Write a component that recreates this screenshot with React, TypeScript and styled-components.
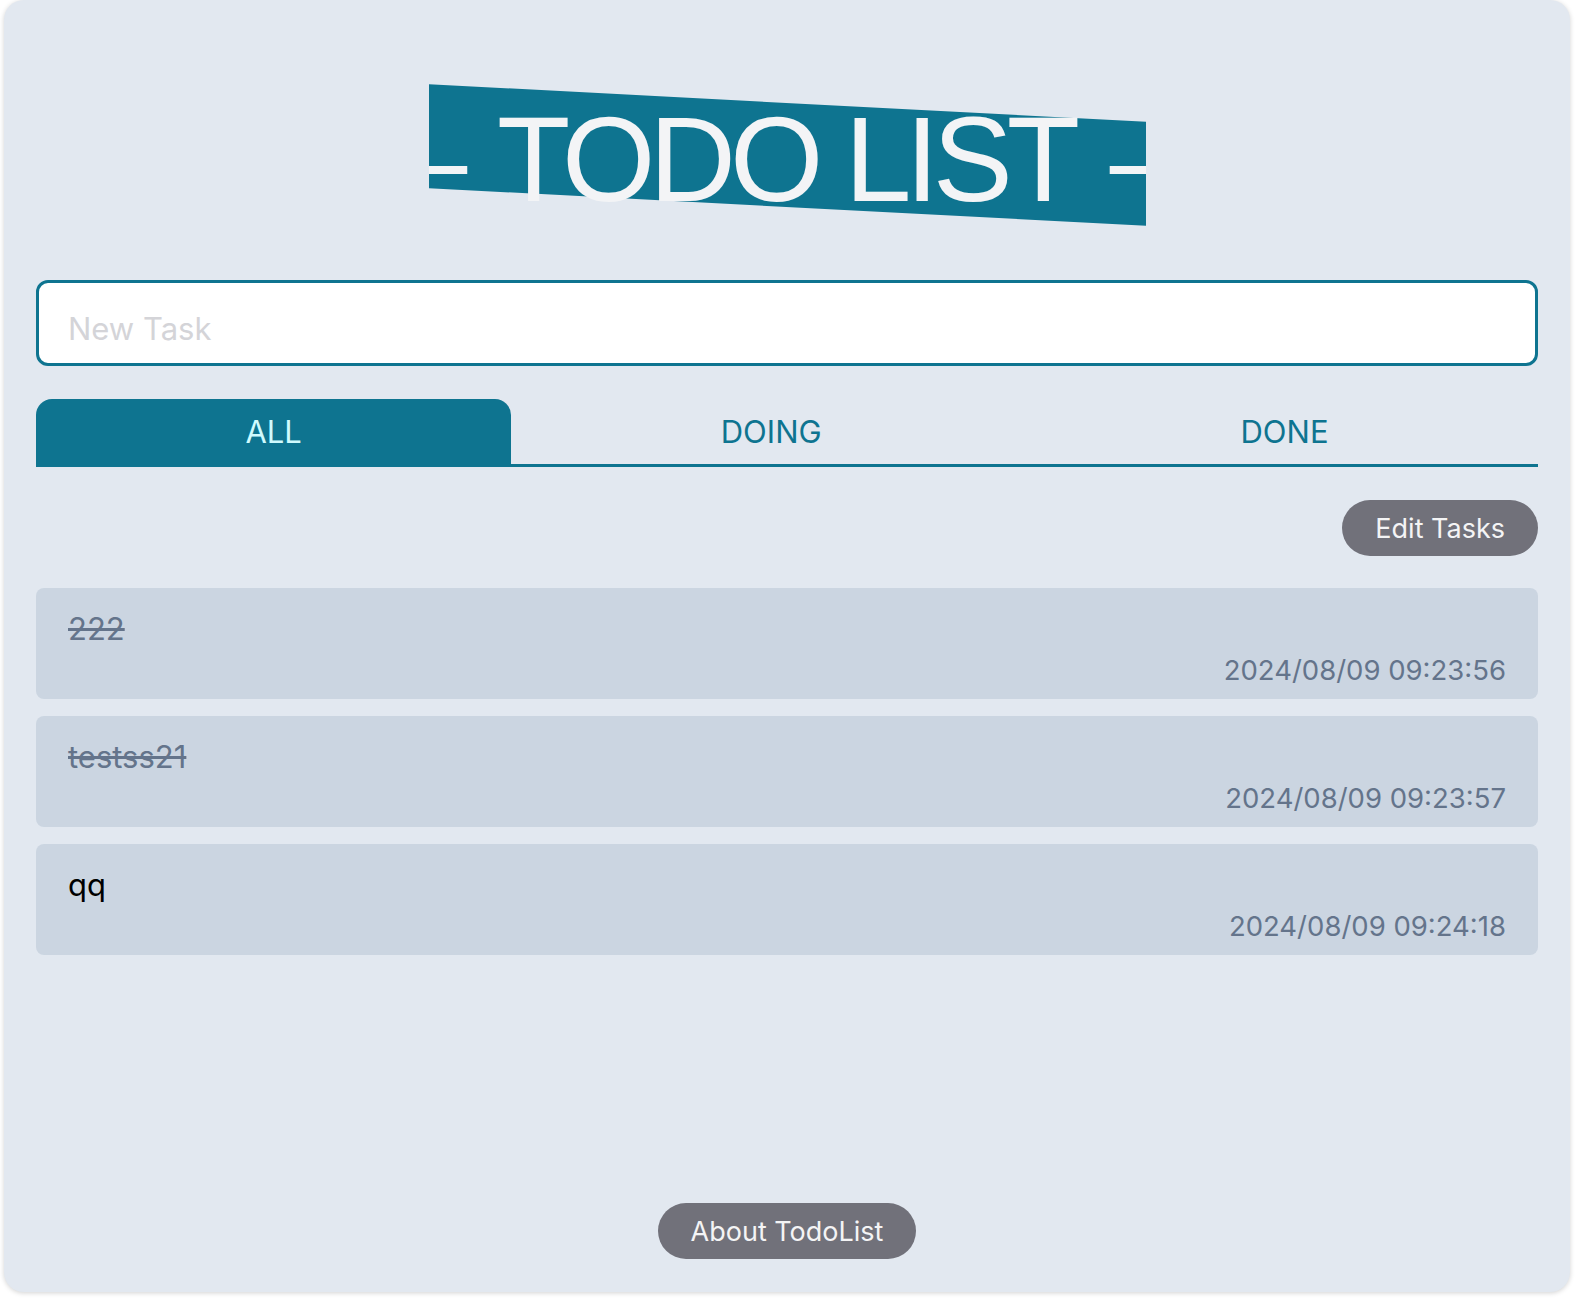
import React, { useState } from 'react';
import styled, { createGlobalStyle } from 'styled-components';

const TEAL = '#0e7490';
const BUTTON_GREY = '#71717a';
const SLATE_TEXT = '#64748b';

type Task = {
  id: number;
  title: string;
  createdAt: string;
  done: boolean;
};

const TASKS: Task[] = [
  { id: 1, title: '222', createdAt: '2024/08/09 09:23:56', done: true },
  { id: 2, title: 'testss21', createdAt: '2024/08/09 09:23:57', done: true },
  { id: 3, title: 'qq', createdAt: '2024/08/09 09:24:18', done: false },
];

const TABS = ['ALL', 'DOING', 'DONE'] as const;
type TabName = (typeof TABS)[number];

const GlobalStyle = createGlobalStyle`
  html, body {
    margin: 0;
    padding: 0;
    background: #ffffff;
  }
  body {
    font-family: Inter, "Noto Sans", "Liberation Sans", sans-serif;
  }
  * {
    box-sizing: border-box;
  }
`;

const App = () => {
  const [tab, setTab] = useState<TabName>('ALL');

  const visible = TASKS.filter((t) =>
    tab === 'ALL' ? true : tab === 'DONE' ? t.done : !t.done,
  );

  return (
    <PageWrapper>
      <GlobalStyle />
      <CardMain>
        <Banner>
          <BannerClip>
            <BannerLine>
              <span>–</span>
              <span>TODO LIST</span>
              <span>–</span>
            </BannerLine>
          </BannerClip>
        </Banner>

        <TaskInput type="text" placeholder="New Task" />

        <TabBar>
          {TABS.map((name) => (
            <TabButton
              key={name}
              type="button"
              $active={tab === name}
              onClick={() => setTab(name)}
            >
              {name}
            </TabButton>
          ))}
        </TabBar>

        <ToolbarRow>
          <PillButton type="button">Edit Tasks</PillButton>
        </ToolbarRow>

        <TaskList>
          {visible.map((task) => (
            <TaskItem key={task.id}>
              <TaskTitle $done={task.done}>{task.title}</TaskTitle>
              <TaskTime>{task.createdAt}</TaskTime>
            </TaskItem>
          ))}
        </TaskList>

        <FooterRow>
          <PillButton type="button">About TodoList</PillButton>
        </FooterRow>
      </CardMain>
    </PageWrapper>
  );
};

const PageWrapper = styled.div`
  padding: 0 6px 6px 4px;
`;

const CardMain = styled.main`
  display: flex;
  flex-direction: column;
  height: 1292px;
  padding: 0 32px 33px;
  background: #e2e8f0;
  border-radius: 20px;
  box-shadow: 0 1px 5px rgba(0, 0, 0, 0.18);
`;

const Banner = styled.h1`
  position: relative;
  width: 717px;
  height: 104px;
  margin: 103px auto 0;
  font-weight: 400;
  &::before {
    content: '';
    position: absolute;
    inset: 0;
    background: ${TEAL};
    transform: skewY(3deg);
  }
`;

// the dashes run past the banner's sides, so the line is clipped to its width
const BannerClip = styled.div`
  position: relative;
  overflow: hidden;
`;

const BannerLine = styled.div`
  display: flex;
  justify-content: space-between;
  margin: 0 -25px 0 -28px;
  white-space: nowrap;
  font-family: 'Liberation Sans', Arial, sans-serif;
  font-size: 120px;
  line-height: 112px;
  letter-spacing: -6px;
  color: #f3f4f6;
`;

const TaskInput = styled.input`
  display: block;
  width: 100%;
  height: 86px;
  margin-top: 73px;
  padding: 10px 29px 0;
  border: 3px solid ${TEAL};
  border-radius: 12px;
  background: #ffffff;
  font-family: inherit;
  font-size: 31px;
  color: #18181b;
  outline: none;
  &::placeholder {
    color: #d4d4d8;
  }
`;

const TabBar = styled.nav`
  display: flex;
  margin-top: 33px;
  border-bottom: 3px solid ${TEAL};
`;

const TabButton = styled.button<{ $active: boolean }>`
  flex: 1 1 auto;
  height: 65px;
  padding: 0;
  border: none;
  border-radius: 16px 16px 0 0;
  background: ${(p) => (p.$active ? TEAL : 'transparent')};
  color: ${(p) => (p.$active ? '#cffafe' : TEAL)};
  font-family: inherit;
  font-size: 31px;
  cursor: pointer;
`;

const ToolbarRow = styled.div`
  display: flex;
  justify-content: flex-end;
  margin: 33px 0 32px;
`;

const PillButton = styled.button`
  height: 56px;
  padding: 0 33px;
  border: none;
  border-radius: 28px;
  background: ${BUTTON_GREY};
  color: #f4f4f5;
  font-family: inherit;
  font-size: 27px;
  cursor: pointer;
`;

const TaskList = styled.ul`
  display: flex;
  flex-direction: column;
  gap: 17px;
  margin: 0;
  padding: 0;
  list-style: none;
`;

const TaskItem = styled.li`
  height: 111px;
  padding: 21px 32px 0;
  background: #cbd5e1;
  border-radius: 8px;
`;

const TaskTitle = styled.div<{ $done: boolean }>`
  font-size: 31px;
  line-height: 40px;
  color: ${(p) => (p.$done ? SLATE_TEXT : '#000000')};
  text-decoration: ${(p) => (p.$done ? 'line-through' : 'none')};
`;

const TaskTime = styled.div`
  margin-top: 3px;
  text-align: right;
  font-size: 27.5px;
  line-height: 36px;
  color: ${SLATE_TEXT};
`;

const FooterRow = styled.footer`
  display: flex;
  justify-content: center;
  margin-top: auto;
`;

export default App;
